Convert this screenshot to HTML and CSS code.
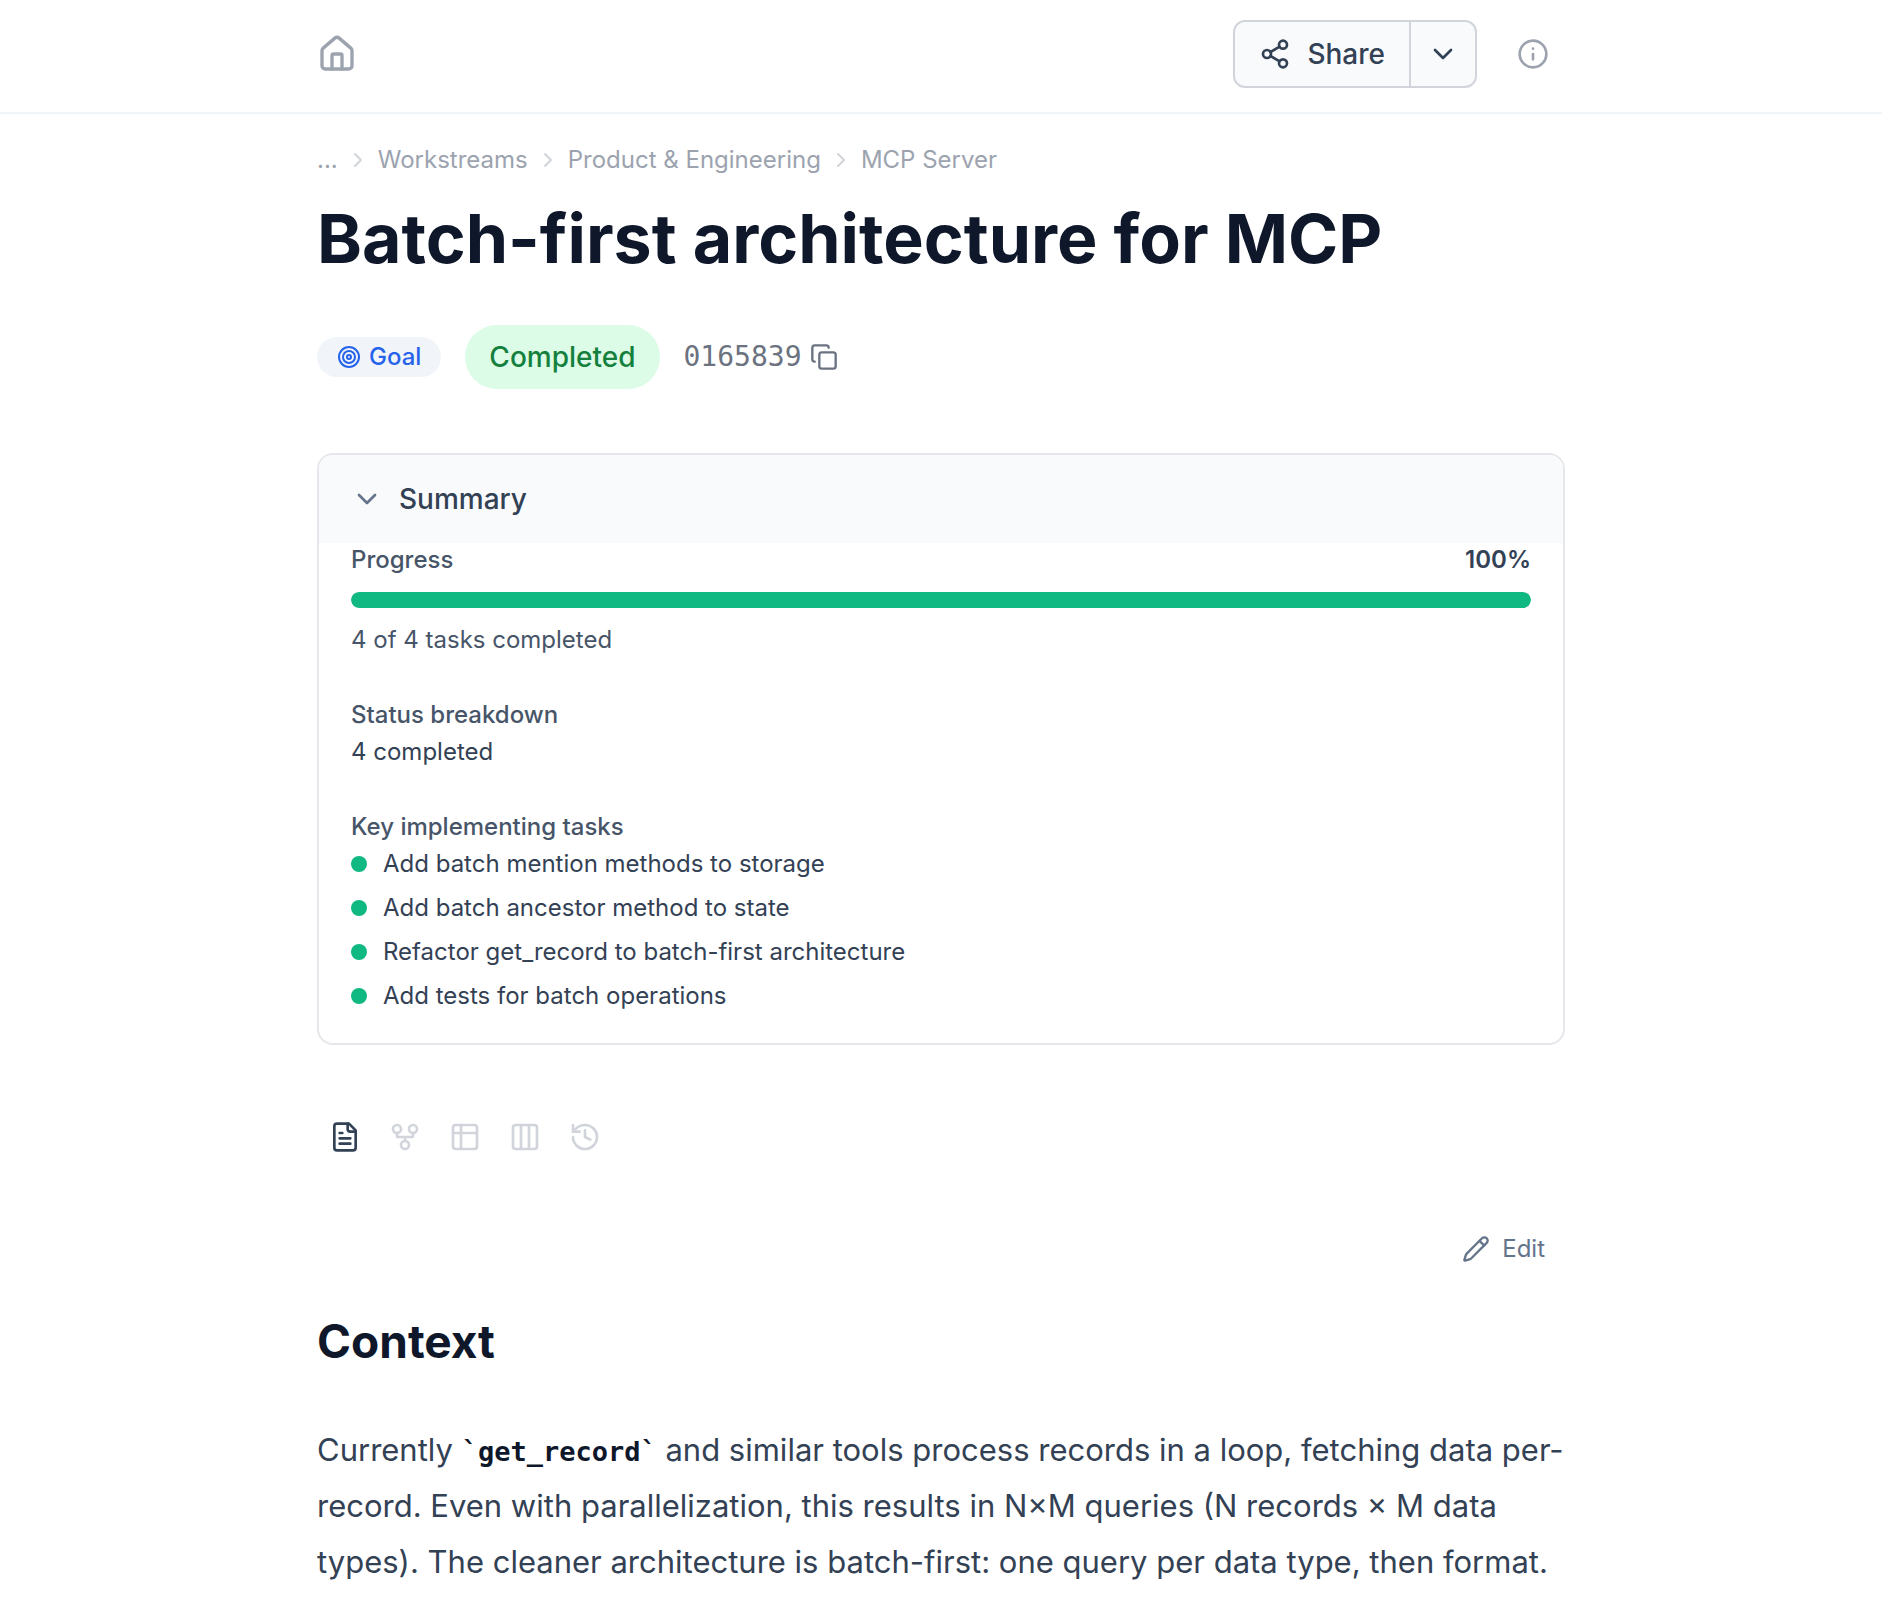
FILE: index.html
```html
<!DOCTYPE html>
<html lang="en">
<head>
<meta charset="utf-8">
<meta name="viewport" content="width=device-width, initial-scale=1">
<title>Batch-first architecture for MCP</title>
<link rel="stylesheet" href="styles.css">
</head>
<body>
<header class="topbar">
  <div class="container topbar-inner">
    <a class="home-link" href="#" aria-label="Home">
      <svg class="icon icon-xl" viewBox="0 0 24 24"><path d="M15 21v-8a1 1 0 0 0-1-1h-4a1 1 0 0 0-1 1v8"/><path d="M3 10a2 2 0 0 1 .709-1.528l7-5.999a2 2 0 0 1 2.582 0l7 5.999A2 2 0 0 1 21 10v9a2 2 0 0 1-2 2H5a2 2 0 0 1-2-2z"/></svg>
    </a>
    <div class="topbar-actions">
      <div class="split-button">
        <button class="split-main" type="button">
          <svg class="icon icon-lg" viewBox="0 0 24 24"><circle cx="18" cy="5" r="3"/><circle cx="6" cy="12" r="3"/><circle cx="18" cy="19" r="3"/><path d="M8.59 13.51l6.83 3.98M15.41 6.51l-6.82 3.98"/></svg>
          Share
        </button>
        <button class="split-more" type="button" aria-label="More share options">
          <svg class="icon icon-lg" viewBox="0 0 24 24"><path d="m6 9 6 6 6-6"/></svg>
        </button>
      </div>
      <button class="info-button" type="button" aria-label="Info">
        <svg class="icon icon-lg" viewBox="0 0 24 24"><circle cx="12" cy="12" r="10"/><path d="M12 16v-4M12 8h.01"/></svg>
      </button>
    </div>
  </div>
</header>

<main class="container page">
  <nav class="breadcrumbs" aria-label="Breadcrumb">
    <a href="#">...</a>
    <svg class="icon icon-sm crumb-sep" viewBox="0 0 24 24"><path d="m9 18 6-6-6-6"/></svg>
    <a href="#">Workstreams</a>
    <svg class="icon icon-sm crumb-sep" viewBox="0 0 24 24"><path d="m9 18 6-6-6-6"/></svg>
    <a href="#">Product &amp; Engineering</a>
    <svg class="icon icon-sm crumb-sep" viewBox="0 0 24 24"><path d="m9 18 6-6-6-6"/></svg>
    <a href="#">MCP Server</a>
  </nav>

  <h1 class="title">Batch-first architecture for MCP</h1>

  <div class="meta">
    <span class="type-badge">
      <svg class="icon icon-sm" viewBox="0 0 24 24"><circle cx="12" cy="12" r="10"/><circle cx="12" cy="12" r="6"/><circle cx="12" cy="12" r="2"/></svg>
      Goal
    </span>
    <button class="status-badge" type="button">Completed</button>
    <button class="record-id" type="button">
      0165839
      <svg class="icon icon-md" viewBox="0 0 24 24"><rect x="8" y="8" width="14" height="14" rx="2"/><path d="M4 16c-1.1 0-2-.9-2-2V4c0-1.1.9-2 2-2h10c1.1 0 2 .9 2 2"/></svg>
    </button>
  </div>

  <section class="summary">
    <button class="summary-toggle" type="button" aria-expanded="true" aria-controls="summary-body">
      <svg class="icon icon-lg" viewBox="0 0 24 24"><path d="m6 9 6 6 6-6"/></svg>
      Summary
    </button>
    <div class="summary-body" id="summary-body">
      <div class="progress">
        <div class="progress-head">
          <h2 class="summary-label" id="progress-label">Progress</h2>
          <span class="progress-value">100%</span>
        </div>
        <div class="progress-track" role="progressbar" aria-labelledby="progress-label" aria-valuenow="100" aria-valuemin="0" aria-valuemax="100">
          <div class="progress-fill" style="width: 100%"></div>
        </div>
        <p class="progress-note">4 of 4 tasks completed</p>
      </div>
      <div class="summary-group">
        <h2 class="summary-label">Status breakdown</h2>
        <p class="summary-text">4 completed</p>
      </div>
      <div class="summary-group">
        <h2 class="summary-label">Key implementing tasks</h2>
        <ul class="task-list">
          <li><a href="#">Add batch mention methods to storage</a></li>
          <li><a href="#">Add batch ancestor method to state</a></li>
          <li><a href="#">Refactor get_record to batch-first architecture</a></li>
          <li><a href="#">Add tests for batch operations</a></li>
        </ul>
      </div>
    </div>
  </section>

  <div class="views" role="tablist" aria-label="Views">
    <button class="view active" type="button" role="tab" aria-selected="true" aria-label="Document">
      <svg class="icon icon-lg" viewBox="0 0 24 24"><path d="M15 2H6a2 2 0 0 0-2 2v16a2 2 0 0 0 2 2h12a2 2 0 0 0 2-2V7z"/><path d="M14 2v4a2 2 0 0 0 2 2h4M10 9H8M16 13H8M16 17H8"/></svg>
    </button>
    <button class="view" type="button" role="tab" aria-selected="false" aria-label="Graph">
      <svg class="icon icon-lg" viewBox="0 0 24 24"><circle cx="12" cy="18" r="3"/><circle cx="6" cy="6" r="3"/><circle cx="18" cy="6" r="3"/><path d="M18 9v2c0 .6-.4 1-1 1H7c-.6 0-1-.4-1-1V9M12 12v3"/></svg>
    </button>
    <button class="view" type="button" role="tab" aria-selected="false" aria-label="Table">
      <svg class="icon icon-lg" viewBox="0 0 24 24"><rect x="3" y="3" width="18" height="18" rx="2"/><path d="M3 9h18M9 3v18"/></svg>
    </button>
    <button class="view" type="button" role="tab" aria-selected="false" aria-label="Board">
      <svg class="icon icon-lg" viewBox="0 0 24 24"><rect x="3" y="3" width="18" height="18" rx="2"/><path d="M9 3v18M15 3v18"/></svg>
    </button>
    <button class="view" type="button" role="tab" aria-selected="false" aria-label="History">
      <svg class="icon icon-lg" viewBox="0 0 24 24"><path d="M3 12a9 9 0 1 0 9-9 9.75 9.75 0 0 0-6.74 2.74L3 8"/><path d="M3 3v5h5M12 7v5l4 2"/></svg>
    </button>
  </div>

  <div class="doc-actions">
    <button class="edit-button" type="button">
      <svg class="icon icon-md" viewBox="0 0 24 24"><path d="M21.174 6.812a1 1 0 0 0-3.986-3.987L3.842 16.174a2 2 0 0 0-.5.83l-1.321 4.352a.5.5 0 0 0 .623.622l4.353-1.32a2 2 0 0 0 .83-.497z"/><path d="m15 5 4 4"/></svg>
      Edit
    </button>
  </div>

  <article class="doc">
    <h2>Context</h2>
    <p>Currently <code>`get_record`</code> and similar tools process records in a loop, fetching data per-record. Even with parallelization, this results in N×M queries (N records × M data types). The cleaner architecture is batch-first: one query per data type, then format.</p>
  </article>
</main>
</body>
</html>
```

FILE: styles.css
```css
* {
  box-sizing: border-box;
}

body {
  margin: 0;
  background: #fff;
  color: #334155;
  font-family: Inter, "Liberation Sans", sans-serif;
  font-size: 24px;
  line-height: 32px;
}

h1, h2, p, ul {
  margin: 0;
}

button {
  margin: 0;
  padding: 0;
  border: 0;
  background: none;
  color: inherit;
  font: inherit;
  cursor: pointer;
}

a {
  color: inherit;
  text-decoration: none;
}

.container {
  width: 100%;
  max-width: 1312px;
  margin: 0 auto;
  padding: 0 32px;
}

/* Icons */
.icon {
  display: block;
  flex: none;
  fill: none;
  stroke: currentColor;
  stroke-width: 2;
  stroke-linecap: round;
  stroke-linejoin: round;
}

.icon-sm { width: 24px; height: 24px; }
.icon-md { width: 28px; height: 28px; }
.icon-lg { width: 32px; height: 32px; }
.icon-xl { width: 40px; height: 40px; }

/* Top bar */
.topbar {
  border-bottom: 2px solid #f1f5f9;
}

.topbar-inner {
  display: flex;
  align-items: center;
  justify-content: space-between;
  padding-top: 20px;
  padding-bottom: 24px;
}

.home-link,
.info-button {
  color: #9ca3af;
}

.topbar-actions {
  display: flex;
  align-items: center;
  gap: 24px;
}

.split-button {
  display: flex;
  height: 68px;
  border: 2px solid #d1d5db;
  border-radius: 12px;
  background: #f8fafc;
  color: #334155;
}

.split-main {
  display: flex;
  align-items: center;
  gap: 16px;
  padding: 0 24px;
  font-size: 28px;
  font-weight: 500;
}

.split-more {
  padding: 0 16px;
  border-left: 2px solid #d1d5db;
}

.info-button {
  padding: 16px;
}

/* Page heading */
.page {
  padding-top: 30px;
  padding-bottom: 28px;
}

.breadcrumbs {
  display: flex;
  flex-wrap: wrap;
  align-items: center;
  gap: 8px;
  color: #9ca3af;
}

.crumb-sep {
  color: #d1d5db;
}

.title {
  margin-top: 16px;
  color: #0f172a;
  font-size: 68px;
  line-height: 92px;
  font-weight: 700;
}

.meta {
  display: flex;
  flex-wrap: wrap;
  align-items: center;
  gap: 24px;
  margin-top: 41px;
}

.type-badge {
  display: flex;
  align-items: center;
  gap: 8px;
  padding: 4px 20px;
  border-radius: 20px;
  background: #f1f5f9;
  color: #2563eb;
  font-weight: 500;
}

.status-badge {
  padding: 12px 24px;
  border-radius: 32px;
  background: #dcfce7;
  color: #15803d;
  font-size: 28px;
  line-height: 40px;
  font-weight: 500;
}

.record-id {
  display: flex;
  align-items: center;
  gap: 8px;
  color: #6b7280;
  font-family: "DejaVu Sans Mono", monospace;
  font-size: 28px;
}

/* Summary card */
.summary {
  margin-top: 64px;
  border: 2px solid #e5e7eb;
  border-radius: 16px;
  overflow: hidden;
}

.summary-toggle {
  display: flex;
  align-items: center;
  gap: 16px;
  width: 100%;
  padding: 24px 32px;
  background: #f8fafc;
  font-size: 28px;
  line-height: 40px;
  font-weight: 500;
  text-align: left;
}

.summary-toggle .icon {
  color: #64748b;
}

.summary-body {
  display: flex;
  flex-direction: column;
  gap: 43px;
  padding: 1px 32px 31px;
}

.summary-label {
  color: #475569;
  font-size: 24px;
  font-weight: 500;
}

.progress {
  display: flex;
  flex-direction: column;
  gap: 16px;
}

.progress-head {
  display: flex;
  justify-content: space-between;
}

.progress-value {
  font-weight: 600;
}

.progress-track {
  height: 16px;
  border-radius: 8px;
  background: #e5e7eb;
  overflow: hidden;
}

.progress-fill {
  height: 100%;
  border-radius: 8px;
  background: #10b981;
}

.progress-note {
  color: #475569;
}

.summary-group {
  display: flex;
  flex-direction: column;
  gap: 5px;
}

.task-list {
  display: flex;
  flex-direction: column;
  gap: 12px;
  padding: 0;
  list-style: none;
}

.task-list li {
  display: flex;
  align-items: center;
  gap: 16px;
}

.task-list li::before {
  content: "";
  flex: none;
  width: 16px;
  height: 16px;
  border-radius: 50%;
  background: #10b981;
}

/* View switcher */
.views {
  display: flex;
  gap: 4px;
  margin-top: 64px;
}

.view {
  padding: 12px;
  border-radius: 8px;
  color: #d1d5db;
}

.view.active {
  color: #334155;
}

/* Document */
.doc-actions {
  display: flex;
  justify-content: flex-end;
  margin-top: 60px;
}

.edit-button {
  display: flex;
  align-items: center;
  gap: 12px;
  padding: 8px 20px;
  color: #64748b;
}

.doc h2 {
  margin-top: 36px;
  color: #0f172a;
  font-size: 46px;
  line-height: 64px;
  font-weight: 700;
}

.doc p {
  margin-top: 49px;
  font-size: 31px;
  line-height: 56px;
}

.doc code {
  color: #0f172a;
  font-family: "DejaVu Sans Mono", monospace;
  font-size: 27px;
  font-weight: 700;
  line-height: 1;
}
```
